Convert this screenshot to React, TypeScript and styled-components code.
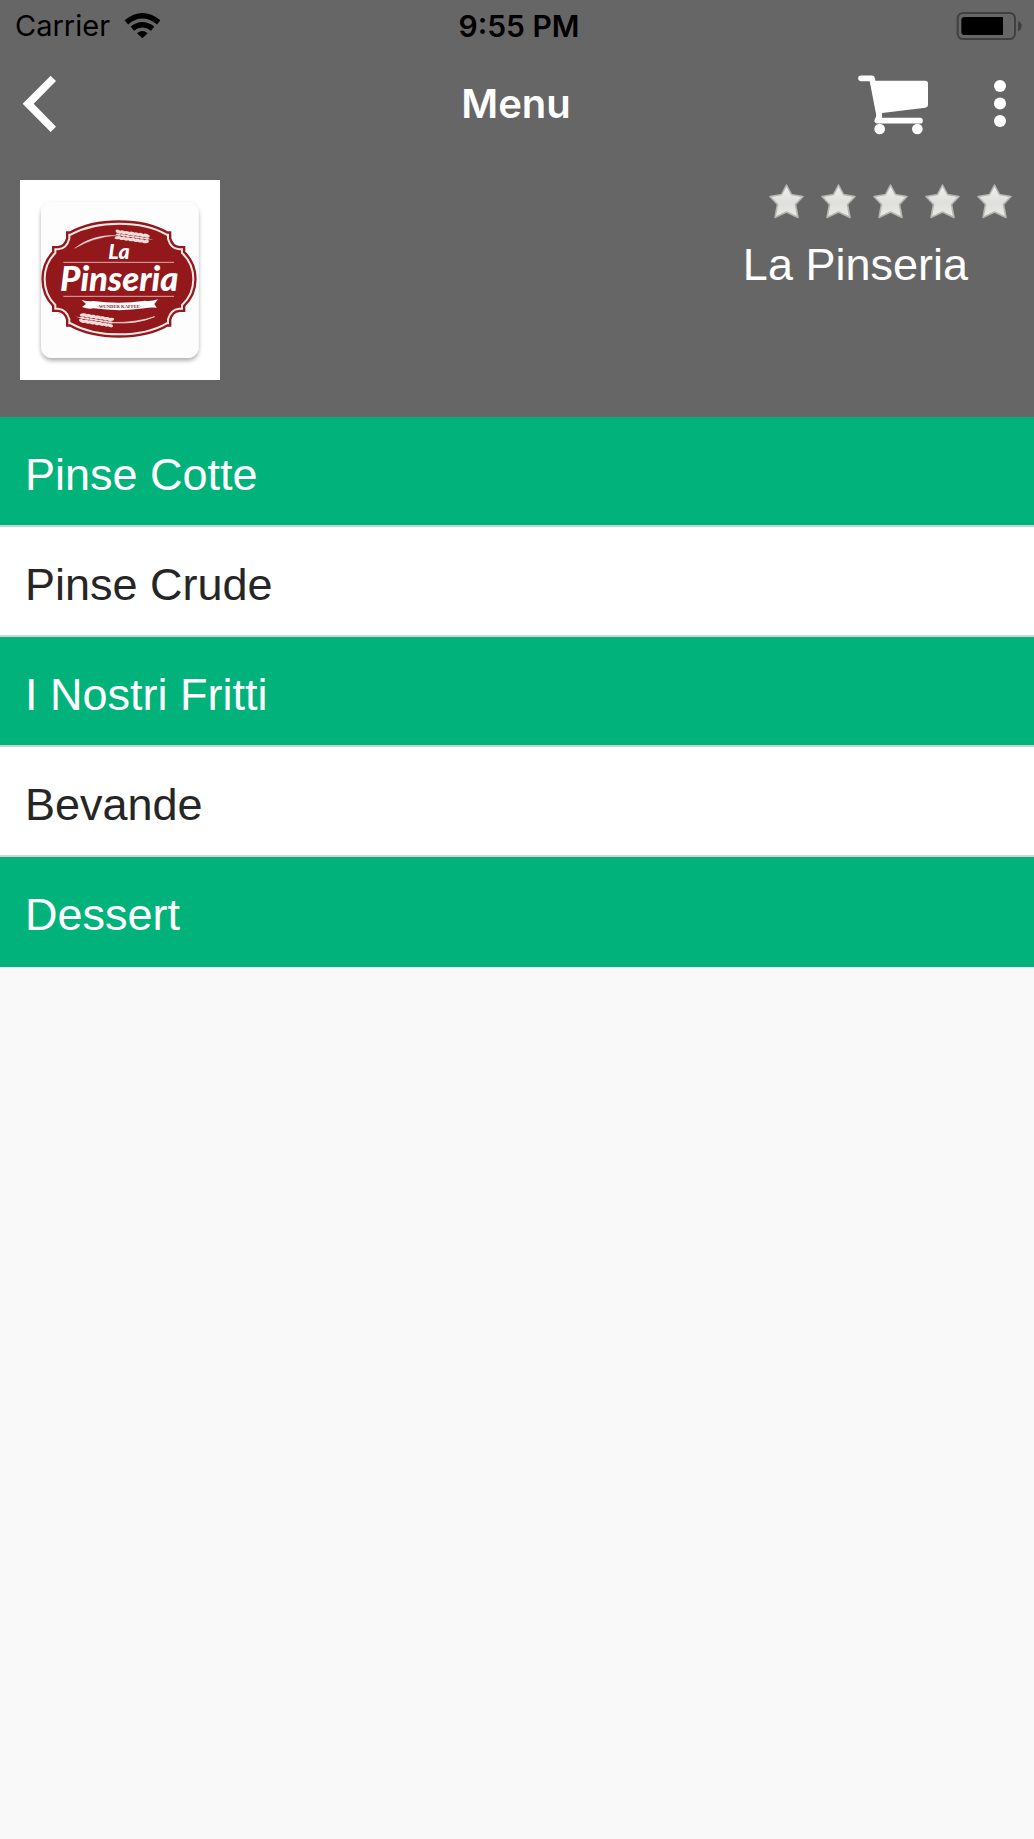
import React from "react";
import styled, { createGlobalStyle } from "styled-components";

const GlobalStyle = createGlobalStyle`
  * { box-sizing: border-box; }
  body {
    margin: 0;
    background: #f9f9f9;
    font-family: "Liberation Sans", Arial, sans-serif;
  }
`;

const Page = styled.main`
  min-height: 100vh;
  background: #f9f9f9;
`;

const Header = styled.header`
  background: #666666;
`;

const StatusBar = styled.div`
  display: grid;
  grid-template-columns: 1fr auto 1fr;
  align-items: center;
  height: 52px;
  padding: 0 11px 0 15px;
  color: #000;
  font-family: Inter, sans-serif;
  font-size: 29px;
  line-height: 36px;
`;

const Carrier = styled.div`
  display: flex;
  align-items: center;
  gap: 14px;
`;

const Time = styled.time`
  font-size: 30px;
  font-weight: 600;
`;

const Battery = styled.svg`
  display: block;
  width: 67px;
  height: 30px;
  justify-self: end;
`;

const Wifi = styled.svg`
  display: block;
  width: 37px;
  height: 28px;
`;

const NavBar = styled.nav`
  display: grid;
  grid-template-columns: 1fr auto 1fr;
  align-items: center;
  height: 104px;
  padding: 0 22px 0 20px;
`;

const Title = styled.h1`
  margin: 0;
  color: #fff;
  font-family: Inter, sans-serif;
  font-size: 40px;
  font-weight: 600;
  line-height: 52px;
`;

const Actions = styled.div`
  display: flex;
  align-items: center;
  justify-content: flex-end;
  gap: 54px;
`;

const IconButton = styled.button<{ $width: number }>`
  display: flex;
  align-items: center;
  width: ${(p) => p.$width}px;
  height: 66px;
  padding: 0;
  border: 0;
  background: none;
  color: #fff;
  cursor: pointer;

  svg {
    display: block;
    width: 100%;
  }
`;

const Profile = styled.section`
  display: flex;
  justify-content: space-between;
  align-items: flex-start;
  padding: 24px 22px 37px 20px;
`;

const Logo = styled.svg`
  display: block;
  width: 200px;
  height: 200px;
  background: #fff;
`;

const Details = styled.div`
  display: flex;
  flex-direction: column;
  align-items: flex-end;
  gap: 19px;
  padding-top: 3px;
`;

const Stars = styled.div`
  display: flex;
  gap: 16px;
`;

const StarIcon = styled.svg`
  display: block;
  width: 36px;
  height: 37px;
`;

const Name = styled.h2`
  margin: 0;
  padding-right: 44px;
  color: #fff;
  font-size: 45px;
  font-weight: 400;
  line-height: 52px;
`;

const Categories = styled.ul`
  margin: 0;
  padding: 0;
  list-style: none;
`;

const Category = styled.button<{ $filled: boolean }>`
  display: block;
  width: 100%;
  height: 110px;
  padding: 8px 25px 0;
  border: 0;
  border-bottom: 2px solid ${(p) => (p.$filled ? "#c4d6d0" : "#d4d4d4")};
  background: ${(p) => (p.$filled ? "#02b27b" : "#fff")};
  color: ${(p) => (p.$filled ? "#fff" : "#262626")};
  font-family: inherit;
  font-size: 45px;
  line-height: 52px;
  text-align: left;
  cursor: pointer;

  li:last-child > & {
    padding-top: 6px;
    border-bottom: 0;
  }
`;

const categories = ["Pinse Cotte", "Pinse Crude", "I Nostri Fritti", "Bevande", "Dessert"];

const badge =
  "M327 161 Q240 161 182 194 L178 194 L178 206 Q170 236 144 238 L136 238 L136 249 Q104 280 104 327 Q104 374 136 405 L136 416 L144 416 Q170 418 178 448 L178 460 L182 460 Q240 493 327 493 Q414 493 470 460 L474 460 L474 448 Q482 418 508 416 L516 416 L516 405 Q550 374 550 327 Q550 280 516 249 L516 238 L508 238 Q482 236 474 206 L474 194 L470 194 Q414 161 327 161 Z";

const grains = [0, 1, 2, 3, 4, 5, 6];

function Wheat() {
  return (
    <g fill="#f3dcd9">
      {grains.map((i) => (
        <g key={i}>
          <ellipse cx={i * 14} cy={-9} rx={10} ry={5} transform={`rotate(14 ${i * 14} -9)`} />
          <ellipse cx={i * 14} cy={0} rx={8} ry={3} />
          <ellipse cx={i * 14} cy={9} rx={10} ry={5} transform={`rotate(-14 ${i * 14} 9)`} />
        </g>
      ))}
      <path d="M84 -2 L106 0 L84 2Z" />
    </g>
  );
}

function PinseriaLogo() {
  return (
    <Logo viewBox="30 30 600 600" role="img" aria-label="La Pinseria">
      <defs>
        <filter id="cardShadow" x="-10%" y="-10%" width="120%" height="120%">
          <feDropShadow dx="0" dy="8" stdDeviation="6" floodColor="#000" floodOpacity="0.32" />
        </filter>
      </defs>
      <rect x="93" y="96" width="473" height="468" rx="34" fill="#fdfdfd" filter="url(#cardShadow)" />
      <path d={badge} fill="#93181c" stroke="#93181c" strokeWidth="20" />
      <path d={badge} fill="none" stroke="#f8e9e7" strokeWidth="6" />
      <path d="M194 235 Q245 194 320 196 Q250 202 194 235Z" fill="#f3dcd9" stroke="#f3dcd9" strokeWidth="1" />
      <g transform="translate(325 194) rotate(8)">
        <Wheat />
      </g>
      <path d="M434 440 Q380 464 305 458 Q380 458 434 440Z" fill="#f3dcd9" stroke="#f3dcd9" strokeWidth="2" />
      <g transform="translate(301 457) rotate(189)">
        <Wheat />
      </g>
      <path d="M160 277H492M160 379H492" stroke="#dba9a7" strokeWidth="3" />
      <g fill="#fff" fontFamily="Lato, sans-serif" fontWeight="900" fontStyle="italic">
        <text x="295" y="266" fontSize="64">La</text>
        <text x="150" y="362" fontSize="104">Pinseria</text>
      </g>
      <path
        d="M215 390 Q235 396 250 393 Q330 404 404 392 Q424 395 444 388 L433 402 L440 413 Q420 411 404 415 Q330 426 250 415 Q235 418 216 411 L228 402Z"
        fill="#fff"
      />
      <text
        x="328"
        y="414"
        fontSize="14"
        fontWeight="700"
        fontFamily="Liberation Serif, serif"
        textAnchor="middle"
        fill="#93181c"
      >
        ·WUNDER KAFFEE·
      </text>
    </Logo>
  );
}

function Star() {
  return (
    <StarIcon viewBox="0 0 36 37" aria-hidden="true">
      <defs>
        <linearGradient id="starFill" x1="0" y1="0" x2="0" y2="1">
          <stop offset="0" stopColor="#f0f0ed" />
          <stop offset="0.55" stopColor="#dfe0db" />
          <stop offset="1" stopColor="#ebebe7" />
        </linearGradient>
      </defs>
      <path
        d="M18.5 2 L23.5 11.5 L35 13.5 L27.5 21.5 L30 34.5 L18.5 29 L7 34.5 L9.5 21.5 L2 13.5 L13.5 11.5Z"
        fill="url(#starFill)"
        stroke="#b4b4b0"
        strokeWidth="1.6"
        strokeLinejoin="round"
      />
    </StarIcon>
  );
}

export default function App() {
  return (
    <Page>
      <GlobalStyle />
      <Header>
        <StatusBar>
          <Carrier>
            <span>Carrier</span>
            <Wifi viewBox="372 33 111 84" aria-hidden="true">
              <g fill="none" stroke="#000" strokeWidth="16">
                <path d="M379 64 Q427 25 476 64" />
                <path d="M397 83 Q427 59 458 83" />
              </g>
              <path d="M411 97 Q427 83 443 97 L427 112Z" />
            </Wifi>
          </Carrier>
          <Time>9:55 PM</Time>
          <Battery viewBox="366 30 201 90" role="img" aria-label="Battery">
            <rect x="371" y="36" width="172" height="78" rx="16" fill="none" stroke="#404040" strokeWidth="6" />
            <path d="M392 48H507V102H392Q382 102 382 92V58Q382 48 392 48Z" />
            <path d="M552 60Q563 64 563 75Q563 87 552 91Z" fill="#404040" />
          </Battery>
        </StatusBar>
        <NavBar>
          <IconButton $width={40} type="button" aria-label="Back">
            <svg viewBox="60 222 120 180">
              <path d="M68 311 L152 227 L168 243 L101 311 L168 380 L152 396Z" fill="currentColor" />
            </svg>
          </IconButton>
          <Title>Menu</Title>
          <Actions>
            <IconButton $width={80} type="button" aria-label="Cart">
              <svg viewBox="60 213 240 198">
                <g fill="none" stroke="currentColor" strokeWidth="17" strokeLinecap="round" strokeLinejoin="round">
                  <path d="M81 235H114L136 348L130 362H258" />
                </g>
                <path
                  d="M114 242H274Q282 242 282 250V315Q282 322 274 323L144 339L142 354L128 352Z"
                  fill="currentColor"
                />
                <circle cx="137" cy="387" r="16" fill="currentColor" />
                <circle cx="250" cy="387" r="16" fill="currentColor" />
              </svg>
            </IconButton>
            <IconButton $width={24} type="button" aria-label="More options">
              <svg viewBox="0 0 24 66">
                <g fill="currentColor">
                  <circle cx="12" cy="15" r="6" />
                  <circle cx="12" cy="32.6" r="6" />
                  <circle cx="12" cy="50" r="6" />
                </g>
              </svg>
            </IconButton>
          </Actions>
        </NavBar>
        <Profile>
          <PinseriaLogo />
          <Details>
            <Stars role="img" aria-label="Rating">
              <Star />
              <Star />
              <Star />
              <Star />
              <Star />
            </Stars>
            <Name>La Pinseria</Name>
          </Details>
        </Profile>
      </Header>
      <Categories>
        {categories.map((label, i) => (
          <li key={label}>
            <Category type="button" $filled={i % 2 === 0}>
              {label}
            </Category>
          </li>
        ))}
      </Categories>
    </Page>
  );
}
